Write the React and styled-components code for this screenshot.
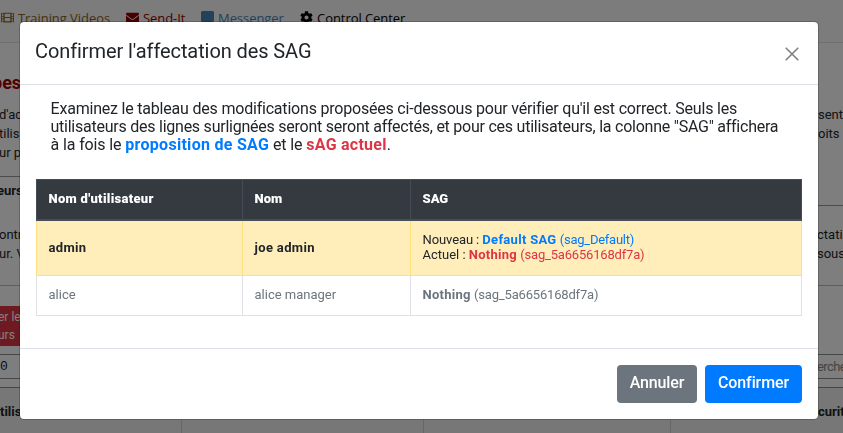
import React from "react";
import styled, { createGlobalStyle } from "styled-components";
import { FaFilm, FaEnvelope, FaCog } from "react-icons/fa";

const GlobalStyle = createGlobalStyle`
  *, *::before, *::after { box-sizing: border-box; }
  html, body { margin: 0; height: 433px; overflow: hidden; }
  body { font-family: Roboto, "Liberation Sans", sans-serif; font-size: 16px; color: #212529; background: #fdfdfd; }
`;

/* Page underneath the dialog */
const Page = styled.div`
  width: 843px;
  height: 433px;
  overflow: hidden;
  display: flex;
  flex-direction: column;
`;
const Nav = styled.nav`
  flex: none;
  height: 43px;
  padding: 9px 0 0 1px;
  display: flex;
  align-items: flex-start;
  background: #f8f8f8;
  border-bottom: 1px solid #e0e0e0;
  font: 13px/18px "Open Sans", "Noto Sans", sans-serif;
  letter-spacing: -0.06px;
`;
const NavItem = styled.span`
  display: flex;
  flex: none;
  gap: 4px;
  width: ${(p) => p.$width}px;
  color: ${(p) => p.$color};
  white-space: nowrap;
  svg { flex: none; margin-top: 2px; }
`;
const Strip = styled.div`
  flex: none;
  height: ${(p) => p.$height}px;
  display: grid;
  grid-template-columns: 60px 1fr 26px;
`;
const Edge = styled.div`
  white-space: nowrap;
  font-size: ${(p) => p.$size || 13}px;
  font-weight: ${(p) => p.$weight || 400};
  line-height: ${(p) => p.$line || 19}px;
  padding-top: ${(p) => p.$top || 0}px;
  margin-left: ${(p) => p.$shift || 0}px;
  color: ${(p) => p.$color || "#212529"};
  border-top: ${(p) => (p.$rule ? `1px solid ${p.$rule}` : "none")};
`;
const RedButton = styled.div`
  height: 40px;
  width: 60px;
  margin-top: 20px;
  background: #dc3545;
  color: #fff;
  font-size: 12px;
  line-height: 18px;
  padding-top: 2px;
`;
const Field = styled.div`
  height: 25px;
  border: solid #8c8c8c;
  border-width: 1px 0;
  font-size: 13px;
  line-height: 23px;
  letter-spacing: ${(p) => p.$spacing || 0}px;
  color: ${(p) => p.$color || "#212529"};
  font-family: ${(p) => (p.$mono ? '"Liberation Mono", monospace' : "inherit")};
`;
const GridFoot = styled.div`
  flex: 1;
  display: grid;
  grid-template-columns: 182px 242px 247px 1fr;
  background: #eeeeee;
  border-top: 1px solid #8c8c8c;
  font-size: 13px;
  font-weight: 700;
  line-height: 47px;
`;
const GridCell = styled.div`
  border-right: 1px solid #cfcfcf;
  white-space: nowrap;
  padding-left: ${(p) => p.$left || 0}px;
  &:last-child { border-right: 0; }
`;

/* Dialog */
const Backdrop = styled.div`
  position: fixed;
  inset: 0;
  background: rgba(0, 0, 0, 0.5);
  padding: 21px 24px 0 19px;
`;
const Dialog = styled.section`
  width: 800px;
  height: 399px;
  background: #fff;
  background-clip: padding-box;
  border: 1px solid rgba(0, 0, 0, 0.2);
  border-radius: 5px;
  display: flex;
  flex-direction: column;
`;
const Header = styled.header`
  height: 63px;
  padding: 15px 16px;
  display: flex;
  justify-content: space-between;
  border-bottom: 1px solid #dee2e6;
`;
const Title = styled.h5`
  margin: -1px 0 0 -1px;
  font-size: 20px;
  line-height: 30px;
  font-weight: 400;
  letter-spacing: -0.09px;
`;
const Close = styled.button`
  border: 0;
  background: none;
  padding: 9px 3px 0 0;
  width: 17px;
  height: 24px;
  svg { display: block; }
`;
const Body = styled.div`
  flex: 1;
  padding: 15px 16px 0;
`;
const Intro = styled.p`
  margin: 0 0 25px;
  padding: 0 0 0 14.5px;
  line-height: 18px;
  white-space: nowrap;
`;
const Line = styled.span`
  display: block;
  letter-spacing: ${(p) => p.$spacing}px;
`;
const Strong = styled.strong`
  font-weight: 700;
  color: ${(p) => p.$color || "inherit"};
  letter-spacing: ${(p) => p.$spacing || 0}px;
`;
const Table = styled.table`
  width: 766px;
  table-layout: fixed;
  border-collapse: collapse;
  font-size: 13px;
  line-height: 15px;
`;
const Col = styled.col`
  width: ${(p) => p.$width}px;
`;
const Th = styled.th`
  height: 40px;
  padding: 0 11.5px 1px;
  text-align: left;
  font-weight: 900;
  letter-spacing: ${(p) => p.$spacing || 0}px;
  color: #fff;
  background: #343a40;
  border: 1px solid #454d55;
  border-bottom-width: 2px;
`;
const Td = styled.td`
  height: ${(p) => (p.$highlight ? 56 : 40)}px;
  padding: 0 11.5px ${(p) => (p.$highlight ? 1 : 2)}px;
  vertical-align: middle;
  font-weight: ${(p) => (p.$bold ? 700 : 400)};
  letter-spacing: ${(p) => p.$spacing || 0}px;
  color: ${(p) => (p.$highlight ? "#212529" : "#6c757d")};
  background: ${(p) => (p.$highlight ? "#ffeeba" : "#fff")};
  border: 1px solid ${(p) => (p.$highlight ? "#ffdf7e" : "#dee2e6")};
`;
const Tone = styled.span`
  color: ${(p) => p.$color || "inherit"};
`;
const Code = styled.span`
  letter-spacing: ${(p) => p.$spacing || -0.18}px;
`;
const Footer = styled.footer`
  height: 71px;
  padding: 16px;
  display: flex;
  justify-content: flex-end;
  gap: 8px;
  border-top: 1px solid #dee2e6;
`;
const Button = styled.button`
  height: 38px;
  width: ${(p) => p.$width}px;
  padding: 0 0 2px;
  border: 0;
  border-radius: 4px;
  background: ${(p) => p.$background};
  color: #fff;
  font: 500 16px/24px Roboto, sans-serif;
  letter-spacing: -0.12px;
`;

export default function App() {
  return (
    <>
      <GlobalStyle />
      <Page>
        <Nav>
          <NavItem $color="#8a6424" $width={125}><FaFilm size={13} />Training Videos</NavItem>
          <NavItem $color="#8b0000" $width={75}><FaEnvelope size={13} />Send-It</NavItem>
          <NavItem $color="#4682b4" $width={99}>
            <svg width="13" height="13" viewBox="0 0 13 13"><path fill="currentColor" d="M1.500 0h10A1.500 1.500 0 0 1 13 1.500v8a1.500 1.500 0 0 1-1.500 1.500H8l-3 2v-2H1.500A1.500 1.500 0 0 1 0 9.500v-8A1.500 1.500 0 0 1 1.500 0Z" /></svg>
            Messenger
          </NavItem>
          <NavItem $color="#000" $width={120}><FaCog size={13} />Control Center</NavItem>
        </Nav>
        <Strip $height={61}>
          <Edge $size={18} $weight={700} $color="#a00000" $top={28} $line={24} $shift={-8}>pes</Edge>
        </Strip>
        <Strip $height={72}>
          <Edge $top={1} $shift={-1}>d'ac<br />tilis<br />ur p</Edge>
          <span />
          <Edge $top={1} $shift={1}>sent<br />oits</Edge>
        </Strip>
        <Strip $height={29}>
          <Edge $rule="#999" $weight={700} $line={27} $shift={-3}>eurs</Edge>
        </Strip>
        <Strip $height={80}>
          <Edge $top={20} $shift={-1}>ontr<br />ur. V</Edge>
          <span />
          <Edge $rule="#999" $top={19}>ctati<br />sous</Edge>
        </Strip>
        <Strip $height={69}>
          <Edge $rule="#bbb" $shift={-2}><RedButton>er les<br />urs</RedButton></Edge>
          <span />
          <Edge $rule="#bbb" />
        </Strip>
        <Strip $height={33}>
          <Field $mono>0</Field>
          <span />
          <Field $color="#888" $spacing={-0.6}>erche</Field>
        </Strip>
        <GridFoot>
          <GridCell>tilis</GridCell>
          <GridCell />
          <GridCell />
          <GridCell $left={147}>curit</GridCell>
        </GridFoot>
      </Page>
      <Backdrop>
        <Dialog role="dialog">
          <Header>
            <Title>Confirmer l'affectation des SAG</Title>
            <Close aria-label="Fermer">
              <svg width="14" height="14" viewBox="0 0 14 14"><path d="M.7.7l12.600 12.600M13.300.7L.7 13.300" stroke="#808080" strokeWidth="1.600" /></svg>
            </Close>
          </Header>
          <Body>
            <Intro>
              <Line $spacing={-0.203}>Examinez le tableau des modifications proposées ci-dessous pour vérifier qu'il est correct. Seuls les</Line>
              <Line $spacing={-0.242}>utilisateurs des lignes surlignées seront seront affectés, et pour ces utilisateurs, la colonne "SAG" affichera</Line>
              <Line $spacing={-0.12}>
                à la fois le <Strong $color="#007bff" $spacing={0.28}>proposition de SAG</Strong> et le{" "}
                <Strong $color="#dc3545" $spacing={0.25}>sAG actuel</Strong>.
              </Line>
            </Intro>
            <Table>
              <colgroup><Col $width={206} /><Col $width={168} /><Col $width={391} /></colgroup>
              <thead>
                <tr><Th $spacing={0.3}>Nom d'utilisateur</Th><Th>Nom</Th><Th>SAG</Th></tr>
              </thead>
              <tbody>
                <tr>
                  <Td $highlight $bold $spacing={0.3}>admin</Td>
                  <Td $highlight $bold $spacing={0.35}>joe admin</Td>
                  <Td $highlight>
                    <Code $spacing={-0.1}>Nouveau : </Code><Tone $color="#007bff"><Strong $spacing={0.3}>Default SAG</Strong> <Code $spacing={-0.25}>(sag_Default)</Code></Tone>
                    <br />
                    Actuel : <Tone $color="#dc3545"><Strong $spacing={0.25}>Nothing</Strong> <Code>(sag_5a6656168df7a)</Code></Tone>
                  </Td>
                </tr>
                <tr>
                  <Td>alice</Td>
                  <Td>alice manager</Td>
                  <Td><Strong $spacing={0.28}>Nothing</Strong> <Code>(sag_5a6656168df7a)</Code></Td>
                </tr>
              </tbody>
            </Table>
          </Body>
          <Footer>
            <Button $background="#6c757d" $width={80}>Annuler</Button>
            <Button $background="#007bff" $width={97}>Confirmer</Button>
          </Footer>
        </Dialog>
      </Backdrop>
    </>
  );
}
